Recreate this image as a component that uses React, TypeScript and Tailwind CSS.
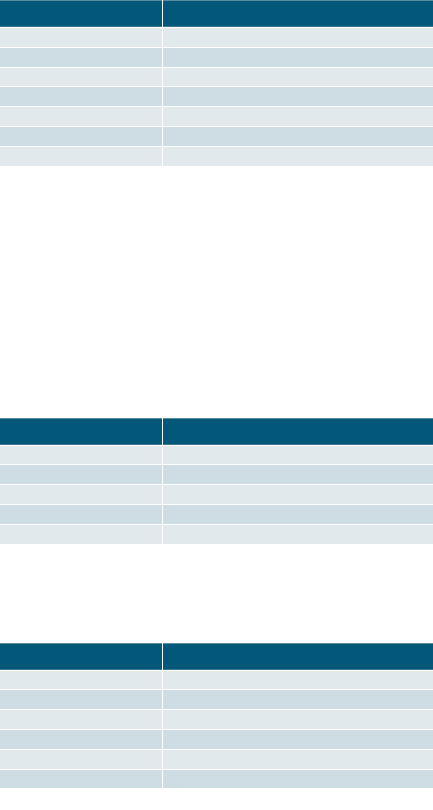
import React from "react";

function Table({ rows }: { rows: number }) {
  const items = Array.from({ length: rows }, (_, i) => i);
  return (
    <div className="grid grid-cols-[162px_1fr] gap-px bg-white">
      <div className="h-[27px] bg-[#03587a] border-t border-t-[#5c8aa0] border-b border-b-[#3a7590]" />
      <div className="h-[27px] bg-[#03587a] border-t border-t-[#5c8aa0] border-b border-b-[#3a7590]" />
      {items.map((i) => (
        <React.Fragment key={i}>
          <div className={i % 2 === 0 ? "h-[18.8px] bg-[#e1e9ed]" : "h-[18.8px] bg-[#cedce3]"} />
          <div className={i % 2 === 0 ? "h-[18.8px] bg-[#e1e9ed]" : "h-[18.8px] bg-[#cedce3]"} />
        </React.Fragment>
      ))}
    </div>
  );
}

export default function App() {
  return (
    <div className="w-[433px] h-[810px] bg-white font-['Liberation_Sans',sans-serif] flex flex-col">
      <Table rows={7} />
      <div className="mt-[252px]">
        <Table rows={5} />
      </div>
      <div className="mt-[99px]">
        <Table rows={6} />
      </div>
    </div>
  );
}
